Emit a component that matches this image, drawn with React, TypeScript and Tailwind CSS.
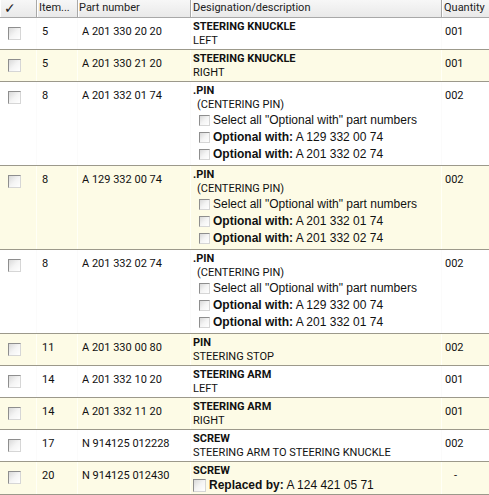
import React from "react";
import clsx from "clsx";

interface Part {
    item: string;
    part: string;
    title: string;
    sub?: string;
    options?: string[];
    replaced?: string;
    qty: string;
}

const parts: Part[] = [
    { item: "5", part: "A 201 330 20 20", title: "STEERING KNUCKLE", sub: "LEFT", qty: "001" },
    { item: "5", part: "A 201 330 21 20", title: "STEERING KNUCKLE", sub: "RIGHT", qty: "001" },
    { item: "8", part: "A 201 332 01 74", title: ".PIN", sub: "(CENTERING PIN)", options: ["A 129 332 00 74", "A 201 332 02 74"], qty: "002" },
    { item: "8", part: "A 129 332 00 74", title: ".PIN", sub: "(CENTERING PIN)", options: ["A 201 332 01 74", "A 201 332 02 74"], qty: "002" },
    { item: "8", part: "A 201 332 02 74", title: ".PIN", sub: "(CENTERING PIN)", options: ["A 129 332 00 74", "A 201 332 01 74"], qty: "002" },
    { item: "11", part: "A 201 330 00 80", title: "PIN", sub: "STEERING STOP", qty: "002" },
    { item: "14", part: "A 201 332 10 20", title: "STEERING ARM", sub: "LEFT", qty: "001" },
    { item: "14", part: "A 201 332 11 20", title: "STEERING ARM", sub: "RIGHT", qty: "001" },
    { item: "17", part: "N 914125 012228", title: "SCREW", sub: "STEERING ARM TO STEERING KNUCKLE", qty: "002" },
    { item: "20", part: "N 914125 012430", title: "SCREW", replaced: "A 124 421 05 71", qty: "-" },
    { item: "20", part: "N 914125 012431", title: "SCREW", sub: "STEERING ARM TO STEERING KNUCKLE", qty: "002" },
];

const cols = "grid grid-cols-[37px_41px_113px_251px_47px]";

function Box({ small }: { small?: boolean }) {
    return (
        <span
            className={clsx(
                "inline-block shrink-0 border border-t-[#8e8e8e] border-l-[#8e8e8e] border-r-[#d6d6d6] border-b-[#d6d6d6] bg-linear-to-br from-[#d9d9d9] via-[#f4f4f4] to-white",
                small ? "w-[11px] h-[11px]" : "w-[13px] h-[13px]"
            )}
        />
    );
}

function HeaderCell({ children, className }: { children: React.ReactNode; className?: string }) {
    return (
        <div className={clsx("h-[17px] leading-[16px] border-r border-r-[#a8a8a8] shadow-[inset_1px_0_0_#ffffff] overflow-hidden whitespace-nowrap", className)}>
            {children}
        </div>
    );
}

function Row({ p, odd }: { p: Part; odd: boolean }) {
    const cell = clsx("border-r", odd ? "border-r-[#fffff6]" : "border-r-[#fbfbfb]");
    return (
        <div className={clsx(cols, "border-b border-b-[#9c998b]", odd ? "bg-[#fdfbe6]" : "bg-white")}>
            <div className={clsx(cell, "pl-[8px] pt-[9px]")}>
                <Box />
            </div>
            <div className={clsx(cell, "pl-[5px] pt-[7px] leading-[14px]")}>{p.item}</div>
            <div className={clsx(cell, "pl-[4px] pt-[7px] leading-[14px] whitespace-nowrap")}>{p.part}</div>
            <div className={clsx(cell, "pl-[2px] pt-[2px] pb-[1px] leading-[14px]")}>
                <div className="font-bold">{p.title}</div>
                {p.options ? (
                    <div className="pl-[4px] pb-[1px]">
                        <div>{p.sub}</div>
                        <div className="font-['Liberation_Sans',Arial,sans-serif] text-[12px] leading-[17px] pl-[2px]">
                            <div className="flex items-center gap-[3px]">
                                <Box small />
                                <span>Select all "Optional with" part numbers</span>
                            </div>
                            {p.options.map((o) => (
                                <div key={o} className="flex items-center gap-[3px]">
                                    <Box small />
                                    <span>
                                        <b>Optional with:</b> {o}
                                    </span>
                                </div>
                            ))}
                        </div>
                    </div>
                ) : p.replaced ? (
                    <div className="flex items-center gap-[3px] font-['Liberation_Sans',Arial,sans-serif] text-[12px] leading-[15px]">
                        <Box />
                        <span>
                            <b>Replaced by:</b> {p.replaced}
                        </span>
                    </div>
                ) : (
                    <div className="whitespace-nowrap">{p.sub}</div>
                )}
            </div>
            <div className={clsx("pt-[7px] leading-[14px]", p.qty === "-" ? "pl-[12px]" : "pl-[3px]")}>{p.qty}</div>
        </div>
    );
}

export default function App() {
    return (
        <div className="w-[489px] h-[495px] overflow-hidden bg-white text-[11px] text-[#111] font-['Roboto','Liberation_Sans',sans-serif]">
            <div className={clsx(cols, "bg-linear-to-b from-[#f7f7f7] to-[#e9e9e9] border-b border-b-[#a8a8a8] text-[#222]")}>
                <HeaderCell className="pl-[4px] text-[14px] font-['DejaVu_Sans',sans-serif]">✓</HeaderCell>
                <HeaderCell className="pl-[2px]">Item...</HeaderCell>
                <HeaderCell className="pl-[1px]">Part number</HeaderCell>
                <HeaderCell className="pl-[2px]">Designation/description</HeaderCell>
                <HeaderCell className="pl-[2px] border-r-0">Quantity</HeaderCell>
            </div>
            {parts.map((p, i) => (
                <Row key={i} p={p} odd={i % 2 === 1} />
            ))}
        </div>
    );
}
